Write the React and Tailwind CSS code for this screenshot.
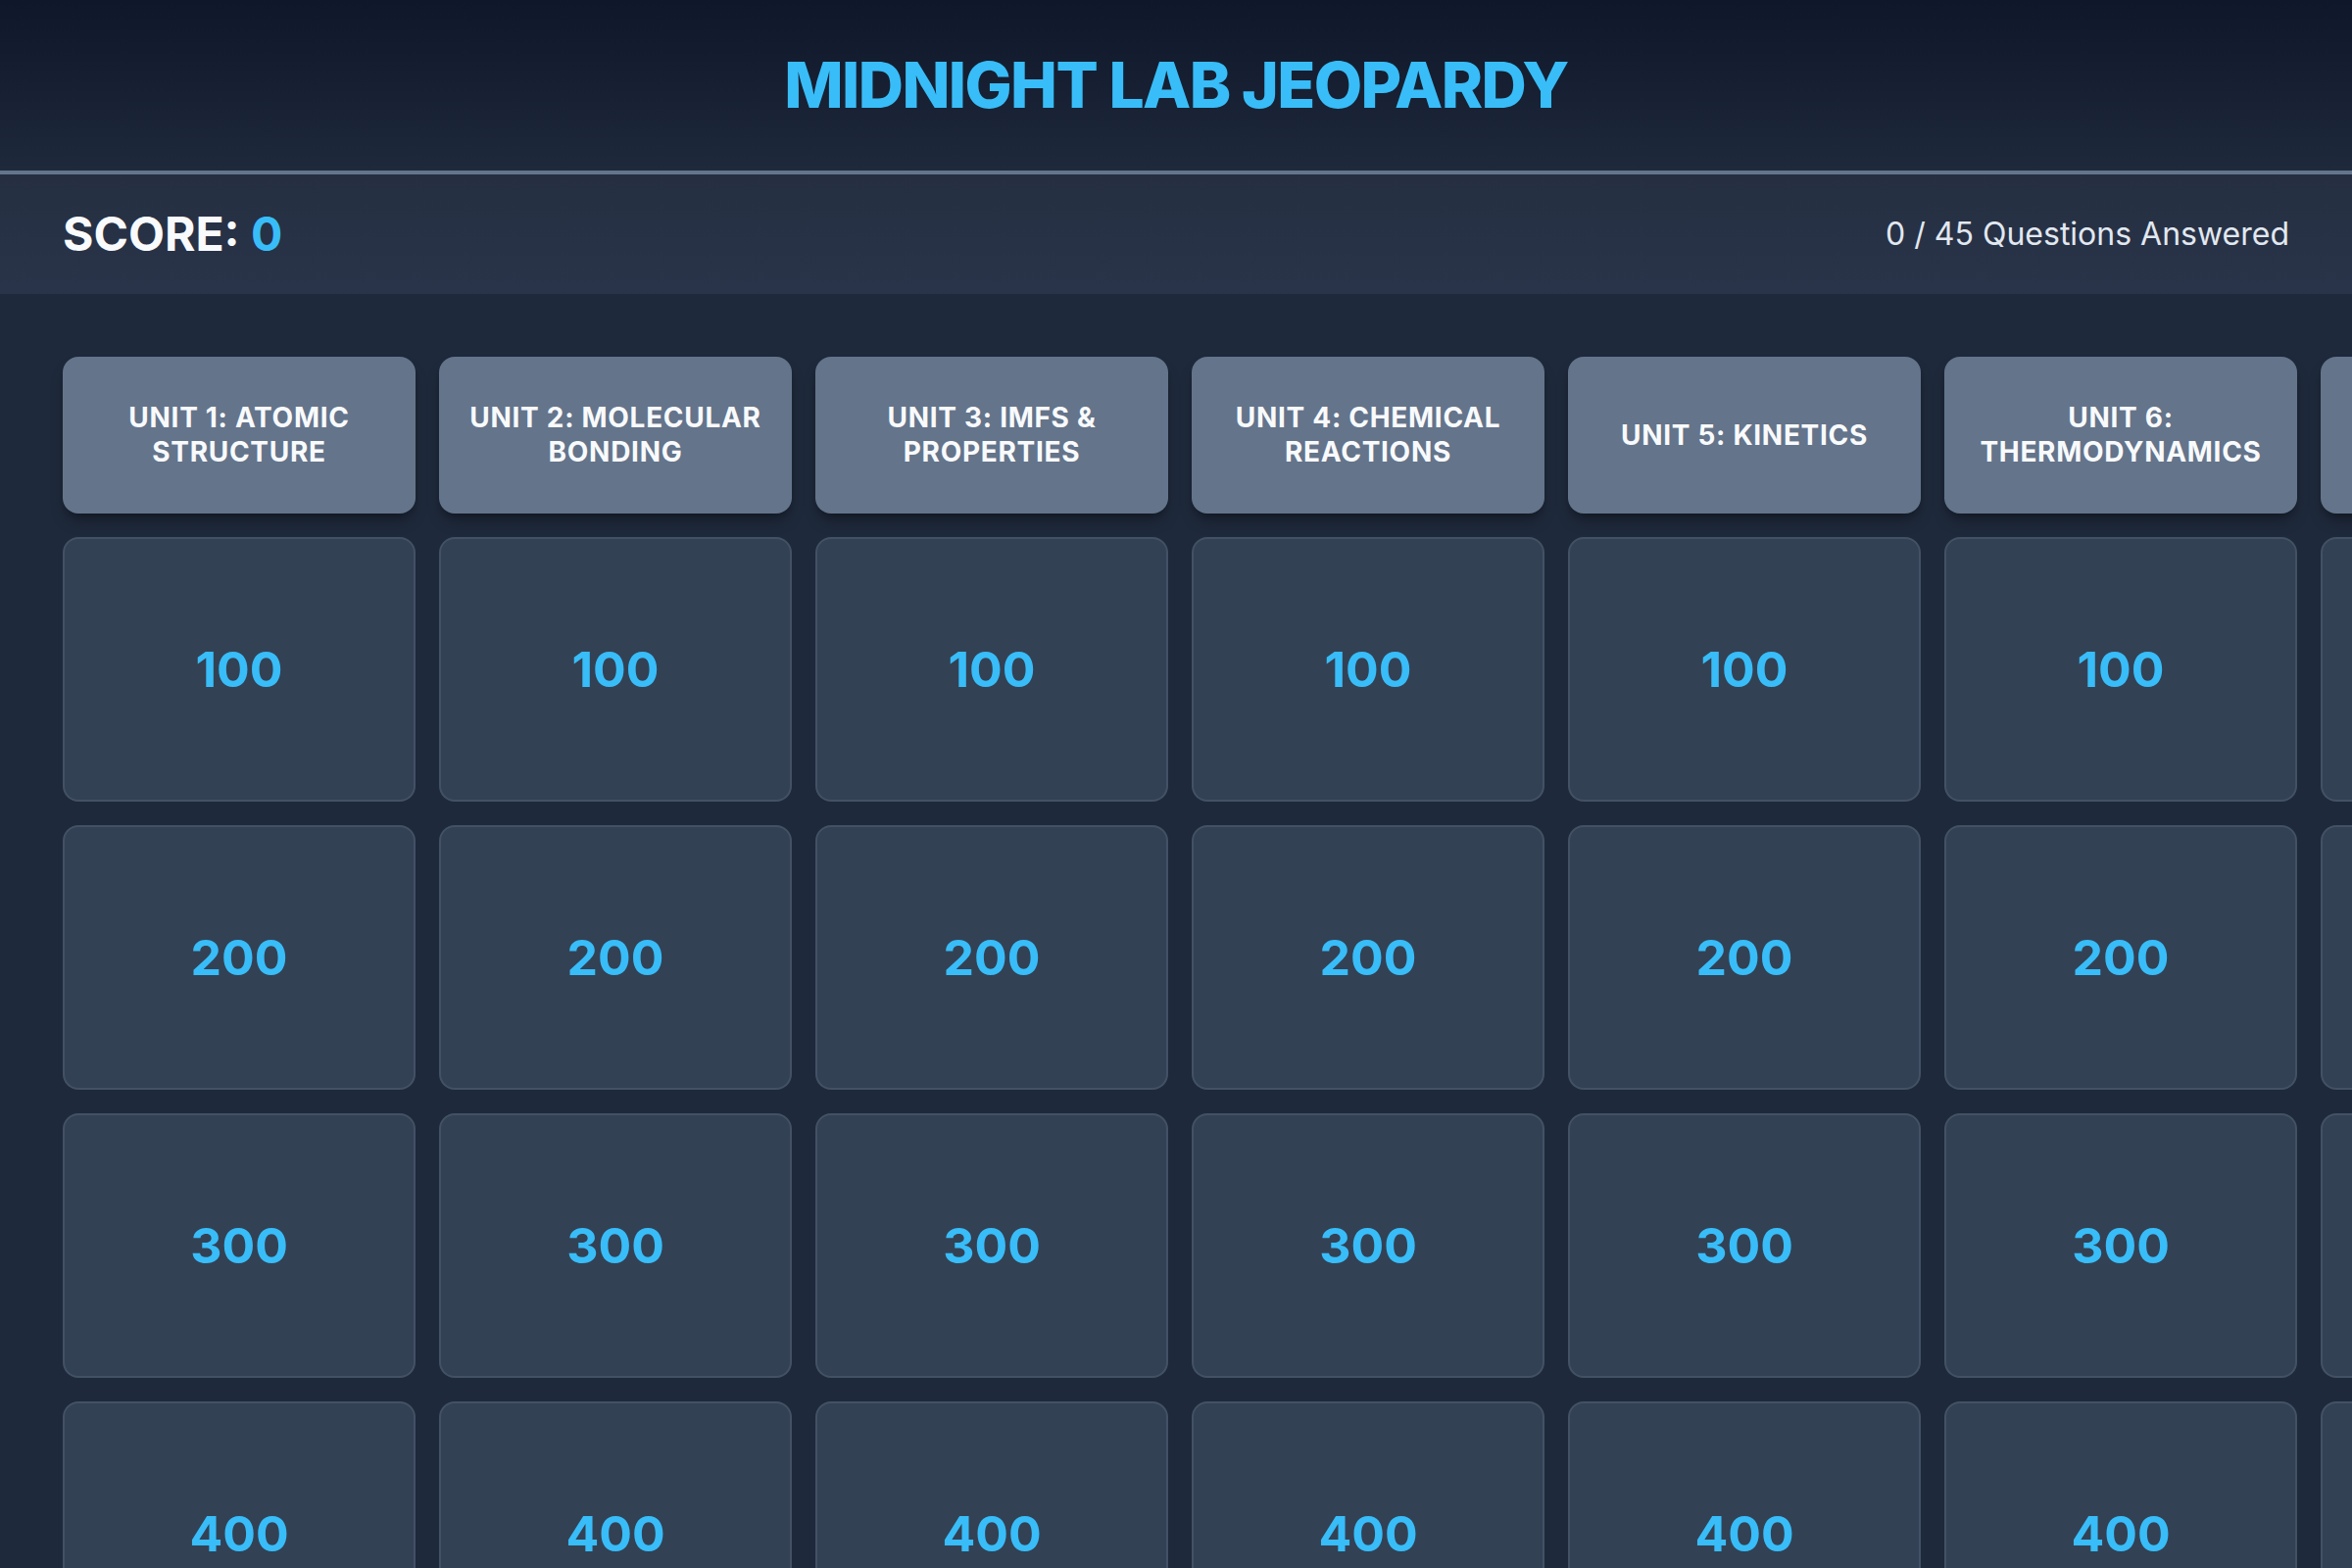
import React from "react";

const categories = [
  "Unit 1: Atomic Structure",
  "Unit 2: Molecular Bonding",
  "Unit 3: IMFs & Properties",
  "Unit 4: Chemical Reactions",
  "Unit 5: Kinetics",
  "Unit 6: Thermodynamics",
  "Unit 7: Chemical Equilibrium",
  "Unit 8: Acids & Bases",
  "Unit 9: Applied Thermo",
];

const values = [100, 200, 300, 400, 500];

function App() {
  return (
    <div className="h-screen overflow-hidden bg-[#1e293b] font-['Inter',sans-serif]">
      <header className="h-[178px] border-b-4 border-[#64748b] bg-gradient-to-b from-[#0f172a] to-[#1e293b] flex items-center justify-center">
        <h1 className="text-[64px] leading-none font-extrabold tracking-tight text-[#38bdf8] uppercase">
          Midnight Lab Jeopardy
        </h1>
      </header>

      <div className="h-[122px] bg-gradient-to-b from-[#252f41] to-[#29344a] px-16 flex items-center justify-between">
        <div className="text-[48px] leading-none font-bold text-[#f8fafc]">
          SCORE: <span className="text-[#38bdf8]">0</span>
        </div>
        <div className="text-[32px] text-[#e2e8f0]">0 / 45 Questions Answered</div>
      </div>

      <div className="px-16 pt-16">
        <div className="grid grid-cols-[repeat(9,360px)] grid-rows-[160px_repeat(5,270px)] grid-flow-col gap-6">
          {categories.map((cat) => (
            <React.Fragment key={cat}>
              <div className="rounded-2xl bg-[#64748b] shadow-lg shadow-black/30 flex items-center justify-center px-6 text-center">
                <span className="text-[28px] leading-[35px] font-bold uppercase tracking-wide text-[#f8fafc]">
                  {cat}
                </span>
              </div>
              {values.map((v) => (
                <button
                  key={v}
                  className="rounded-2xl bg-[#334155] border-2 border-[#475569]/80 flex items-center justify-center"
                >
                  <span className="text-[50px] font-bold text-[#38bdf8]">{v}</span>
                </button>
              ))}
            </React.Fragment>
          ))}
        </div>
      </div>
    </div>
  );
}

export default App;
